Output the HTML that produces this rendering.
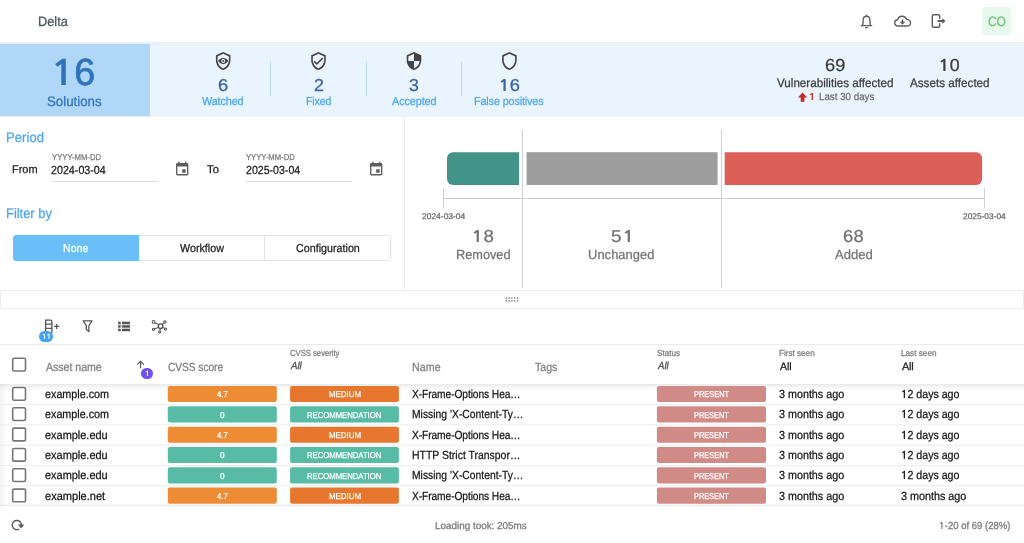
<!DOCTYPE html>
<html lang="en">
<head>
<meta charset="utf-8">
<title>Delta</title>
<style>
html,body{margin:0;padding:0;}
body{width:1024px;height:543px;overflow:hidden;background:#fff;position:relative;
  font-family:"Liberation Sans",Arial,sans-serif;color:#222;}
#page{position:absolute;left:0;top:0;width:1024px;height:543px;overflow:hidden;will-change:transform;text-rendering:geometricPrecision;}
.a{position:absolute;white-space:nowrap;line-height:1;transform-origin:0 50%;-webkit-text-stroke:0.25px;}
.o{font-family:"NanumGothic","Liberation Sans",sans-serif;font-weight:bold;font-size:.92em;-webkit-text-stroke:0;display:inline-block;transform:scaleX(1.2);margin:0 .03em;}
.b{position:absolute;}
svg{position:absolute;overflow:visible;}
.vd{position:absolute;width:1px;background:#b9dbf7;top:62px;height:34px;}
.ul{position:absolute;height:1px;background:#dcdcdc;}
</style>
</head>
<body>
<div id="page">

<!-- HEADER -->
<div id="delta" class="a" style="left:38.42px;top:15.17px;font-size:13.5px;color:#46535c;transform:scaleX(0.948);">Delta</div>
<svg id="hdricons" style="left:0;top:0;" width="1024" height="44" viewBox="0 0 1024 44" fill="none" stroke="#5f5f5f" stroke-width="1.4" stroke-linecap="round" stroke-linejoin="round">
  <!-- bell -->
  <path d="M861.3 25.6 H871.7 M862.5 25.4 C863.1 24.4 863.1 23 863.1 20.6 C863.1 17.8 864.5 16.2 866.5 16.2 C868.5 16.2 869.9 17.8 869.9 20.6 C869.9 23 869.9 24.4 870.5 25.4"/>
  <path d="M866.5 15.2 V16" />
  <path d="M865.6 27.6 H867.4" />
  <!-- cloud -->
  <path d="M898.3 26 C896.2 26 894.7 24.6 894.7 22.8 C894.7 21.1 896 19.8 897.7 19.7 C898.1 17.6 900 16.3 902.2 16.3 C904.3 16.3 906 17.5 906.6 19.4 C908.8 19.3 910.5 20.7 910.5 22.7 C910.5 24.6 909 26 907 26 Z"/>
  <path d="M901.7 19.4 H903.3 V21.7 H905.2 L902.5 24.7 L899.8 21.7 H901.7 Z" fill="#5a5a5a" stroke="none"/>
  <!-- logout -->
  <path d="M939.7 18.4 V15.8 C939.7 15.2 939.2 14.7 938.6 14.7 H933.4 C932.8 14.7 932.3 15.2 932.3 15.8 V26.2 C932.3 26.8 932.8 27.3 933.4 27.3 H938.6 C939.2 27.3 939.7 26.8 939.7 26.2 V23.6"/>
  <path d="M937.6 19.9 H942.2 V18.3 L945.5 21 L942.2 23.7 V22.1 H937.6 Z" fill="#5a5a5a" stroke="none"/>
</svg>
<div class="b" style="left:982.2px;top:6.9px;width:28.8px;height:28.6px;background:#e7f9ed;border-radius:3.5px;"></div>
<div id="co" class="a" style="left:988.19px;top:14.67px;font-size:13.5px;color:#6cc678;letter-spacing:-0.28px;transform:scaleX(0.900);">CO</div>
<!-- SUMMARY BAND -->
<div class="b" style="left:0;top:42px;width:1024px;height:75px;background:#efefef;"></div>
<div class="b" style="left:0;top:43px;width:1024px;height:73px;background:#e9f4fe;"></div>
<div class="b" style="left:0;top:44px;width:150px;height:72px;background:#b1d7f8;"></div>
<div id="n16" class="a" style="left:51.14px;top:54.44px;font-size:37.75px;color:#2f74ba;-webkit-text-stroke:0.76px;"><span class="o">1</span>6</div>
<div id="solutions" class="a" style="left:46.70px;top:95.36px;font-size:13.75px;color:#2f74ba;letter-spacing:-0.03px;transform:scaleX(0.970);">Solutions</div>
<div id="w_n" class="a" style="left:218.03px;top:77.00px;font-size:17.25px;color:#3b63a5;transform:scaleX(1.068);-webkit-text-stroke:0.25px;">6</div>
<div id="w_l" class="a" style="left:202.49px;top:97.17px;font-size:11.5px;color:#4ea7f1;letter-spacing:-0.12px;transform:scaleX(0.940);">Watched</div>
<div class="vd" style="left:270px;"></div>
<div id="f_n" class="a" style="left:313.72px;top:77.00px;font-size:17.25px;color:#3b63a5;transform:scaleX(1.033);-webkit-text-stroke:0.25px;">2</div>
<div id="f_l" class="a" style="left:306.24px;top:97.17px;font-size:11.5px;color:#4ea7f1;letter-spacing:-0.12px;transform:scaleX(0.918);">Fixed</div>
<div class="vd" style="left:365.6px;"></div>
<div id="a_n" class="a" style="left:408.88px;top:77.00px;font-size:17.25px;color:#3b63a5;transform:scaleX(1.022);-webkit-text-stroke:0.25px;">3</div>
<div id="a_l" class="a" style="left:391.89px;top:97.17px;font-size:11.5px;color:#4ea7f1;letter-spacing:-0.11px;transform:scaleX(0.944);">Accepted</div>
<div class="vd" style="left:461px;"></div>
<div id="p_n" class="a" style="left:498.99px;top:77.00px;font-size:17.25px;color:#3b63a5;letter-spacing:-0.48px;transform:scaleX(1.063);-webkit-text-stroke:0.25px;"><span class="o">1</span>6</div>
<div id="p_l" class="a" style="left:474.02px;top:97.17px;font-size:11.5px;color:#4ea7f1;letter-spacing:-0.14px;transform:scaleX(0.940);">False positives</div>
<div id="v69" class="a" style="left:824.95px;top:57.49px;font-size:17.5px;color:#3a3a3a;transform:scaleX(1.042);-webkit-text-stroke:0.25px;">69</div>
<div id="vuln" class="a" style="left:777.38px;top:77.23px;font-size:12.25px;color:#3a3a3a;letter-spacing:0.01px;transform:scaleX(0.949);">Vulnerabilities affected</div>
<div id="one" class="a" style="left:808.80px;top:92.82px;font-size:10.25px;color:#c9302c;transform:scaleX(1.100);font-weight:bold;"><span class="o">1</span></div>
<div id="last30" class="a" style="left:818.68px;top:92.82px;font-size:10.25px;color:#707070;transform:scaleX(0.952);">Last 30 days</div>
<div id="v10" class="a" style="left:938.74px;top:57.49px;font-size:17.5px;color:#3a3a3a;letter-spacing:-0.05px;transform:scaleX(1.019);-webkit-text-stroke:0.25px;"><span class="o">1</span>0</div>
<div id="assets" class="a" style="left:910.29px;top:77.23px;font-size:12.25px;color:#3a3a3a;transform:scaleX(0.953);">Assets affected</div>
<svg id="shields" style="left:0;top:43px;" width="1024" height="73" viewBox="0 43 1024 73" fill="#444">
<g transform="translate(213.48,51.28) scale(0.81)"><path d="M21,11C21,16.55 17.16,21.74 12,23C6.84,21.74 3,16.55 3,11V5L12,1L21,5V11M12,21C15.75,20 19,15.54 19,11.22V6.3L12,3.18L5,6.3V11.22C5,15.54 8.25,20 12,21Z"/><path d="M12 8.2C8.9 8.2 6.6 10.2 5.6 12C6.6 13.8 8.9 15.8 12 15.8C15.1 15.8 17.4 13.8 18.4 12C17.4 10.2 15.1 8.2 12 8.2ZM12 9.6A2.4 2.4 0 1 1 12 14.4A2.4 2.4 0 1 1 12 9.6Z" fill-rule="evenodd"/><circle cx="12" cy="12" r="1.1"/></g>
<g transform="translate(308.78,51.28) scale(0.81)"><path d="M21,11C21,16.55 17.16,21.74 12,23C6.84,21.74 3,16.55 3,11V5L12,1L21,5V11M12,21C15.75,20 19,15.54 19,11.22V6.3L12,3.18L5,6.3V11.22C5,15.54 8.25,20 12,21Z"/><path d="M10,17L6,13L7.41,11.59L10,14.17L16.59,7.58L18,9Z"/></g>
<g transform="translate(404.28,51.28) scale(0.81)"><path d="M12,1L3,5V11C3,16.55 6.84,21.74 12,23C17.16,21.74 21,16.55 21,11V5L12,1M12,11.99H19C18.47,16.11 15.72,19.78 12,20.93V12H5V6.3L12,3.19V11.99Z"/></g>
<g transform="translate(499.68,51.28) scale(0.81)"><path d="M21,11C21,16.55 17.16,21.74 12,23C6.84,21.74 3,16.55 3,11V5L12,1L21,5V11M12,21C15.75,20 19,15.54 19,11.22V6.3L12,3.18L5,6.3V11.22C5,15.54 8.25,20 12,21Z"/></g>
<path d="M802.55 92.6 L807.1 97.5 H804.4 V101.7 H800.7 V97.5 H798 Z" fill="#c62828"/>
</svg>
<!-- PERIOD / FILTER PANEL -->
<div id="period" class="a" style="left:5.83px;top:131.26px;font-size:13.75px;color:#4ba6f2;letter-spacing:0.08px;transform:scaleX(0.948);">Period</div>
<div id="from" class="a" style="left:11.98px;top:165.38px;font-size:11.25px;color:#222;transform:scaleX(0.977);">From</div>
<div id="hint1" class="a" style="left:51.59px;top:153.00px;font-size:8.5px;color:#7a7a7a;transform:scaleX(0.909);">YYYY-MM-DD</div>
<div id="date1" class="a" style="left:51.42px;top:164.85px;font-size:11.75px;color:#1c1c1c;transform:scaleX(0.911);">2024-03-04</div>
<div class="ul" style="left:51.8px;top:180.8px;width:106px;"></div>
<div id="to" class="a" style="left:206.63px;top:165.48px;font-size:11.25px;color:#222;letter-spacing:0.16px;transform:scaleX(0.989);">To</div>
<div id="hint2" class="a" style="left:246.08px;top:153.00px;font-size:8.5px;color:#7a7a7a;transform:scaleX(0.903);">YYYY-MM-DD</div>
<div id="date2" class="a" style="left:245.80px;top:164.85px;font-size:11.75px;color:#1c1c1c;transform:scaleX(0.901);">2025-03-04</div>
<div class="ul" style="left:246.1px;top:180.8px;width:106px;"></div>
<svg id="cal" style="left:0;top:150px;" width="404" height="40" viewBox="0 150 404 40" fill="#5e5e5e">
  <g transform="translate(173.98,161.06) scale(0.685)"><path d="M17 12h-5v5h5v-5zM16 1v2H8V1H6v2H5c-1.11 0-1.99.9-1.99 2L3 19c0 1.1.89 2 2 2h14c1.1 0 2-.9 2-2V5c0-1.1-.9-2-2-2h-1V1h-2zm3 18H5V8h14v11z"/></g>
  <g transform="translate(367.98,161.06) scale(0.685)"><path d="M17 12h-5v5h5v-5zM16 1v2H8V1H6v2H5c-1.11 0-1.99.9-1.99 2L3 19c0 1.1.89 2 2 2h14c1.1 0 2-.9 2-2V5c0-1.1-.9-2-2-2h-1V1h-2zm3 18H5V8h14v11z"/></g>
</svg>
<div id="filterby" class="a" style="left:6.03px;top:207.26px;font-size:13.75px;color:#4ba6f2;transform:scaleX(0.938);">Filter by</div>
<div class="b" style="left:13.3px;top:234.8px;width:377.3px;height:26.2px;border:1px solid #e2e2e2;border-radius:3.5px;box-sizing:border-box;background:#fff;"></div>
<div class="b" style="left:13.3px;top:234.8px;width:125.6px;height:26.2px;background:#6abff8;border-radius:3.5px 0 0 3.5px;"></div>
<div class="b" style="left:264.3px;top:235.8px;width:1px;height:24.2px;background:#e2e2e2;"></div>
<div id="none" class="a" style="left:62.87px;top:244.07px;font-size:11.5px;color:#fff;letter-spacing:-0.04px;transform:scaleX(0.926);">None</div>
<div id="workflow" class="a" style="left:179.91px;top:244.07px;font-size:11.5px;color:#222;transform:scaleX(0.933);">Workflow</div>
<div id="config" class="a" style="left:296.00px;top:244.07px;font-size:11.5px;color:#222;transform:scaleX(0.933);">Configuration</div>
<div class="b" style="left:404px;top:116px;width:1px;height:174px;background:#ececec;"></div>
<!-- DELTA CHART -->
<svg id="chart" style="left:404px;top:120px;" width="620" height="170" viewBox="404 120 620 170">
  <path d="M453 152.2 H519 V185 H453 A6 6 0 0 1 447 179 V158.2 A6 6 0 0 1 453 152.2 Z" fill="#419487"/>
  <rect x="526.6" y="152.2" width="191" height="32.8" fill="#9e9e9e"/>
  <path d="M724.7 152.2 H976.1 A6 6 0 0 1 982.1 158.2 V179 A6 6 0 0 1 976.1 185 H724.7 Z" fill="#dc5f58"/>
  <g fill="#cfcfcf">
    <rect x="443" y="198" width="542" height="1"/>
    <rect x="443" y="188.3" width="1" height="19.2"/>
    <rect x="984" y="188.3" width="1" height="19.2"/>
    <rect x="522" y="130" width="1" height="157.6"/>
    <rect x="721" y="130" width="1" height="157.6"/>
  </g>
</svg>
<div id="d1" class="a" style="left:421.57px;top:213.12px;font-size:8.25px;color:#666;transform:scaleX(1.025);">2024-03-04</div>
<div id="d2" class="a" style="left:962.60px;top:213.12px;font-size:8.25px;color:#666;transform:scaleX(1.013);">2025-03-04</div>
<div id="c18" class="a" style="left:471.89px;top:228.10px;font-size:17.25px;color:#727272;transform:scaleX(1.086);-webkit-text-stroke:0.25px;"><span class="o">1</span>8</div>
<div id="removed" class="a" style="left:455.84px;top:248.48px;font-size:13.25px;color:#727272;transform:scaleX(0.961);">Removed</div>
<div id="c51" class="a" style="left:611.26px;top:228.10px;font-size:17.25px;color:#727272;letter-spacing:0.69px;transform:scaleX(1.100);-webkit-text-stroke:0.25px;">5<span class="o">1</span></div>
<div id="unchanged" class="a" style="left:588.20px;top:248.48px;font-size:13.25px;color:#727272;letter-spacing:0.07px;transform:scaleX(0.973);">Unchanged</div>
<div id="c68" class="a" style="left:843.05px;top:228.10px;font-size:17.25px;color:#727272;letter-spacing:0.18px;transform:scaleX(1.063);-webkit-text-stroke:0.25px;">68</div>
<div id="added" class="a" style="left:834.60px;top:248.48px;font-size:13.25px;color:#727272;transform:scaleX(0.982);">Added</div>
<!-- SPLITTER -->
<div class="b" style="left:0;top:290px;width:1024px;height:18.6px;border:1px solid #ededed;box-sizing:border-box;background:#fff;"></div>
<svg id="grip" style="left:500px;top:294px;" width="24" height="10" viewBox="500 294 24 10" fill="#777"><rect x="505.6" y="297.4" width="1.4" height="1.4"/><rect x="508.4" y="297.4" width="1.4" height="1.4"/><rect x="511.2" y="297.4" width="1.4" height="1.4"/><rect x="514.0" y="297.4" width="1.4" height="1.4"/><rect x="516.8" y="297.4" width="1.4" height="1.4"/><rect x="505.6" y="300.2" width="1.4" height="1.4"/><rect x="508.4" y="300.2" width="1.4" height="1.4"/><rect x="511.2" y="300.2" width="1.4" height="1.4"/><rect x="514.0" y="300.2" width="1.4" height="1.4"/><rect x="516.8" y="300.2" width="1.4" height="1.4"/></svg>
<!-- TOOLBAR -->
<svg id="tbicons" style="left:0;top:310px;" width="200" height="34" viewBox="0 310 200 34" fill="none" stroke="#555" stroke-width="1.3">
  <!-- column plus -->
  <path d="M45.6 333 V320.1 H50.6 Q51.9 320.1 51.9 321.4 V333 M45.6 324.1 H51.9 M45.6 328.4 H51.9"/>
  <path d="M54.1 326.4 H59.2 M56.65 323.9 V328.9"/>
  <!-- filter -->
  <path d="M83.2 320.9 H92 L88.9 325.6 V331.6 L86.3 329.6 V325.6 Z" stroke-linejoin="round"/>
  <!-- list -->
  <g fill="#555" stroke="none">
    <rect x="118.1" y="321.7" width="2.6" height="2.5"/><rect x="122" y="321.7" width="8" height="2.5"/>
    <rect x="118.1" y="325.2" width="2.6" height="2.5"/><rect x="122" y="325.2" width="8" height="2.5"/>
    <rect x="118.1" y="328.7" width="2.6" height="2.5"/><rect x="122" y="328.7" width="8" height="2.5"/>
  </g>
  <!-- hub -->
  <g stroke-width="1.1">
  <path d="M158.6 324.6 L154.9 322.7 M162.3 324.4 L164 322.8 M158.3 327.4 L154.8 328.8 M160.2 328.9 L159.8 330.5 M163 327.4 L164.4 328.4"/>
  <circle cx="160.6" cy="326.2" r="2.3" stroke-width="1.4"/>
  <circle cx="153.6" cy="321.9" r="1.4"/>
  <circle cx="164.8" cy="321.9" r="1.1"/>
  <circle cx="153.5" cy="329.3" r="1.1"/>
  <circle cx="159.6" cy="331.8" r="1.1"/>
  <circle cx="165.5" cy="329.1" r="1.1"/>
  </g>
</svg>
<div class="b" style="left:38.8px;top:330.6px;width:14.5px;height:11.3px;border-radius:5.7px;background:#43a3f3;"></div>
<div id="b11" class="a" style="left:41.72px;top:332.55px;font-size:7.5px;color:#fff;letter-spacing:-0.41px;transform:scaleX(1.100);-webkit-text-stroke:0;"><span class="o">1</span><span class="o">1</span></div>
<!-- TABLE HEADER -->
<div class="b" style="left:0;top:344px;width:1024px;height:1px;background:#ebebeb;"></div>
<div class="b" style="left:0;top:346px;width:1024px;height:38px;background:#fff;"></div>
<div class="b" style="left:0;top:384px;width:1024px;height:7px;background:linear-gradient(to bottom,rgba(0,0,0,.085),rgba(0,0,0,.03) 45%,rgba(0,0,0,0));"></div>
<div class="b" style="left:0;top:384px;width:7px;height:121px;background:linear-gradient(to right,rgba(0,0,0,.05),rgba(0,0,0,0));"></div>
<div id="asset" class="a" style="left:46.06px;top:361.75px;font-size:11.75px;color:#7d7d7d;letter-spacing:-0.02px;transform:scaleX(0.900);">Asset name</div>
<svg id="sorticon" style="left:134px;top:358px;" width="14" height="14" viewBox="134 358 14 14" fill="none" stroke="#5c5c5c" stroke-width="1.15">
  <path d="M140.6 368.2 V361.6 M137.3 364.7 L140.6 361.4 L143.9 364.7"/>
</svg>
<div class="b" style="left:141.3px;top:367.9px;width:11.6px;height:11.4px;border-radius:6px;background:#7150f1;"></div>
<div id="b1" class="a" style="left:145.40px;top:370.25px;font-size:7.5px;color:#fff;transform:scaleX(1.100);"><span class="o">1</span></div>
<div id="cvss" class="a" style="left:167.98px;top:361.85px;font-size:11.75px;color:#7d7d7d;letter-spacing:-0.07px;transform:scaleX(0.870);">CVSS score</div>
<div id="sev" class="a" style="left:290.03px;top:348.69px;font-size:8.75px;color:#7a7a7a;letter-spacing:-0.03px;transform:scaleX(0.882);">CVSS severity</div>
<div id="all1" class="a" style="left:290.69px;top:362.02px;font-size:10.25px;color:#484848;transform:scaleX(0.943);font-style:italic;">All</div>
<div id="name" class="a" style="left:411.92px;top:361.85px;font-size:11.75px;color:#7d7d7d;letter-spacing:0.07px;transform:scaleX(0.907);">Name</div>
<div id="tags" class="a" style="left:535.30px;top:361.85px;font-size:11.75px;color:#7d7d7d;transform:scaleX(0.899);">Tags</div>
<div id="status" class="a" style="left:656.94px;top:348.69px;font-size:8.75px;color:#7a7a7a;transform:scaleX(0.925);">Status</div>
<div id="all2" class="a" style="left:657.60px;top:362.02px;font-size:10.25px;color:#484848;transform:scaleX(0.937);font-style:italic;">All</div>
<div id="first" class="a" style="left:779.00px;top:348.69px;font-size:8.75px;color:#7a7a7a;transform:scaleX(0.928);">First seen</div>
<div id="all3" class="a" style="left:779.55px;top:362.30px;font-size:10.75px;color:#1a1a1a;transform:scaleX(0.978);">All</div>
<div id="last" class="a" style="left:901.22px;top:348.69px;font-size:8.75px;color:#7a7a7a;transform:scaleX(0.937);">Last seen</div>
<div id="all4" class="a" style="left:902.06px;top:362.30px;font-size:10.75px;color:#1a1a1a;letter-spacing:-0.20px;transform:scaleX(1.018);">All</div>
<!-- TABLE ROWS -->
<svg id="chips" style="left:0;top:380px;" width="1024" height="130" viewBox="0 380 1024 130"><rect x="0" y="404.00" width="1024" height="1" fill="#ededed"/><rect x="0" y="424.32" width="1024" height="1" fill="#ededed"/><rect x="0" y="444.64" width="1024" height="1" fill="#ededed"/><rect x="0" y="464.96" width="1024" height="1" fill="#ededed"/><rect x="0" y="485.28" width="1024" height="1" fill="#ededed"/><rect x="0" y="504.80" width="1024" height="1" fill="#e3e3e3"/><rect x="167.8" y="386.00" width="109" height="16.1" rx="2" fill="#ee8c35"/><rect x="290.1" y="386.00" width="108.8" height="16.1" rx="2" fill="#e7772f"/><rect x="656.9" y="386.00" width="109.1" height="16.1" rx="2" fill="#d18b87"/><rect x="167.8" y="406.32" width="109" height="16.1" rx="2" fill="#57bba5"/><rect x="290.1" y="406.32" width="108.8" height="16.1" rx="2" fill="#57bba5"/><rect x="656.9" y="406.32" width="109.1" height="16.1" rx="2" fill="#d18b87"/><rect x="167.8" y="426.64" width="109" height="16.1" rx="2" fill="#ee8c35"/><rect x="290.1" y="426.64" width="108.8" height="16.1" rx="2" fill="#e7772f"/><rect x="656.9" y="426.64" width="109.1" height="16.1" rx="2" fill="#d18b87"/><rect x="167.8" y="446.96" width="109" height="16.1" rx="2" fill="#57bba5"/><rect x="290.1" y="446.96" width="108.8" height="16.1" rx="2" fill="#57bba5"/><rect x="656.9" y="446.96" width="109.1" height="16.1" rx="2" fill="#d18b87"/><rect x="167.8" y="467.28" width="109" height="16.1" rx="2" fill="#57bba5"/><rect x="290.1" y="467.28" width="108.8" height="16.1" rx="2" fill="#57bba5"/><rect x="656.9" y="467.28" width="109.1" height="16.1" rx="2" fill="#d18b87"/><rect x="167.8" y="487.60" width="109" height="16.1" rx="2" fill="#ee8c35"/><rect x="290.1" y="487.60" width="108.8" height="16.1" rx="2" fill="#e7772f"/><rect x="656.9" y="487.60" width="109.1" height="16.1" rx="2" fill="#d18b87"/></svg>
<div id="r0a" class="a" style="left:45.29px;top:388.55px;font-size:11.75px;color:#141414;transform:scaleX(0.917);">example.com</div>
<div id="r0s" class="a" style="left:216.80px;top:389.90px;font-size:8.5px;color:#fff;transform:scaleX(0.905);">4.7</div>
<div id="r0v" class="a" style="left:329.04px;top:389.90px;font-size:8.5px;color:#fff;letter-spacing:-0.03px;transform:scaleX(0.932);">MEDIUM</div>
<div id="r0n" class="a" style="left:412.34px;top:388.55px;font-size:11.75px;color:#141414;letter-spacing:-0.10px;transform:scaleX(0.870);">X-Frame-Options Hea…</div>
<div id="r0p" class="a" style="left:693.80px;top:389.90px;font-size:8.5px;color:#fff;transform:scaleX(0.872);">PRESENT</div>
<div id="r0f" class="a" style="left:779.12px;top:388.55px;font-size:11.75px;color:#141414;transform:scaleX(0.915);">3 months ago</div>
<div id="r0l" class="a" style="left:900.86px;top:388.55px;font-size:11.75px;color:#141414;letter-spacing:-0.03px;transform:scaleX(0.908);"><span class="o">1</span>2 days ago</div>
<div id="r1a" class="a" style="left:45.29px;top:408.87px;font-size:11.75px;color:#141414;transform:scaleX(0.917);">example.com</div>
<div id="r1s" class="a" style="left:219.92px;top:411.22px;font-size:8.5px;color:#fff;transform:scaleX(0.973);">0</div>
<div id="r1v" class="a" style="left:307.05px;top:411.22px;font-size:8.5px;color:#fff;letter-spacing:-0.04px;transform:scaleX(0.912);">RECOMMENDATION</div>
<div id="r1n" class="a" style="left:411.88px;top:408.87px;font-size:11.75px;color:#141414;letter-spacing:0.01px;transform:scaleX(0.880);">Missing 'X-Content-Ty…</div>
<div id="r1p" class="a" style="left:693.98px;top:411.22px;font-size:8.5px;color:#fff;letter-spacing:-0.05px;transform:scaleX(0.872);">PRESENT</div>
<div id="r1f" class="a" style="left:779.00px;top:408.87px;font-size:11.75px;color:#141414;transform:scaleX(0.915);">3 months ago</div>
<div id="r1l" class="a" style="left:900.86px;top:408.87px;font-size:11.75px;color:#141414;letter-spacing:-0.03px;transform:scaleX(0.908);"><span class="o">1</span>2 days ago</div>
<div id="r2a" class="a" style="left:45.28px;top:430.19px;font-size:11.75px;color:#141414;transform:scaleX(0.931);">example.edu</div>
<div id="r2s" class="a" style="left:216.80px;top:430.54px;font-size:8.5px;color:#fff;transform:scaleX(0.905);">4.7</div>
<div id="r2v" class="a" style="left:329.04px;top:430.54px;font-size:8.5px;color:#fff;letter-spacing:-0.03px;transform:scaleX(0.932);">MEDIUM</div>
<div id="r2n" class="a" style="left:412.34px;top:430.19px;font-size:11.75px;color:#141414;letter-spacing:-0.10px;transform:scaleX(0.870);">X-Frame-Options Hea…</div>
<div id="r2p" class="a" style="left:693.98px;top:430.54px;font-size:8.5px;color:#fff;letter-spacing:-0.05px;transform:scaleX(0.872);">PRESENT</div>
<div id="r2f" class="a" style="left:779.12px;top:430.19px;font-size:11.75px;color:#141414;transform:scaleX(0.915);">3 months ago</div>
<div id="r2l" class="a" style="left:900.86px;top:430.19px;font-size:11.75px;color:#141414;letter-spacing:-0.03px;transform:scaleX(0.908);"><span class="o">1</span>2 days ago</div>
<div id="r3a" class="a" style="left:45.28px;top:449.51px;font-size:11.75px;color:#141414;transform:scaleX(0.931);">example.edu</div>
<div id="r3s" class="a" style="left:219.92px;top:450.86px;font-size:8.5px;color:#fff;transform:scaleX(0.973);">0</div>
<div id="r3v" class="a" style="left:307.05px;top:450.86px;font-size:8.5px;color:#fff;letter-spacing:-0.04px;transform:scaleX(0.912);">RECOMMENDATION</div>
<div id="r3n" class="a" style="left:411.91px;top:449.51px;font-size:11.75px;color:#141414;transform:scaleX(0.889);">HTTP Strict Transpor…</div>
<div id="r3p" class="a" style="left:693.80px;top:450.86px;font-size:8.5px;color:#fff;transform:scaleX(0.872);">PRESENT</div>
<div id="r3f" class="a" style="left:779.12px;top:449.51px;font-size:11.75px;color:#141414;transform:scaleX(0.915);">3 months ago</div>
<div id="r3l" class="a" style="left:900.86px;top:449.51px;font-size:11.75px;color:#141414;letter-spacing:-0.03px;transform:scaleX(0.908);"><span class="o">1</span>2 days ago</div>
<div id="r4a" class="a" style="left:45.28px;top:469.83px;font-size:11.75px;color:#141414;transform:scaleX(0.931);">example.edu</div>
<div id="r4s" class="a" style="left:219.92px;top:472.18px;font-size:8.5px;color:#fff;transform:scaleX(0.973);">0</div>
<div id="r4v" class="a" style="left:307.05px;top:472.18px;font-size:8.5px;color:#fff;letter-spacing:-0.04px;transform:scaleX(0.912);">RECOMMENDATION</div>
<div id="r4n" class="a" style="left:411.88px;top:469.83px;font-size:11.75px;color:#141414;letter-spacing:0.01px;transform:scaleX(0.880);">Missing 'X-Content-Ty…</div>
<div id="r4p" class="a" style="left:693.98px;top:472.18px;font-size:8.5px;color:#fff;letter-spacing:-0.05px;transform:scaleX(0.872);">PRESENT</div>
<div id="r4f" class="a" style="left:779.00px;top:469.83px;font-size:11.75px;color:#141414;transform:scaleX(0.915);">3 months ago</div>
<div id="r4l" class="a" style="left:900.86px;top:469.83px;font-size:11.75px;color:#141414;letter-spacing:-0.03px;transform:scaleX(0.908);"><span class="o">1</span>2 days ago</div>
<div id="r5a" class="a" style="left:45.25px;top:491.15px;font-size:11.75px;color:#141414;transform:scaleX(0.940);">example.net</div>
<div id="r5s" class="a" style="left:216.80px;top:491.50px;font-size:8.5px;color:#fff;transform:scaleX(0.905);">4.7</div>
<div id="r5v" class="a" style="left:329.04px;top:491.50px;font-size:8.5px;color:#fff;letter-spacing:-0.03px;transform:scaleX(0.932);">MEDIUM</div>
<div id="r5n" class="a" style="left:412.34px;top:491.15px;font-size:11.75px;color:#141414;letter-spacing:-0.10px;transform:scaleX(0.870);">X-Frame-Options Hea…</div>
<div id="r5p" class="a" style="left:693.98px;top:491.50px;font-size:8.5px;color:#fff;letter-spacing:-0.05px;transform:scaleX(0.872);">PRESENT</div>
<div id="r5f" class="a" style="left:779.12px;top:491.15px;font-size:11.75px;color:#141414;transform:scaleX(0.915);">3 months ago</div>
<div id="r5l" class="a" style="left:901.21px;top:491.15px;font-size:11.75px;color:#141414;transform:scaleX(0.918);">3 months ago</div>
<svg id="checks" style="left:0;top:350px;" width="40" height="160" viewBox="0 350 40 160" fill="#fff" stroke="#757575" stroke-width="1.6"><rect x="12.7" y="358.30" width="12.8" height="12.7" rx="1.4"/><rect x="12.7" y="387.50" width="12.8" height="12.7" rx="1.4"/><rect x="12.7" y="407.82" width="12.8" height="12.7" rx="1.4"/><rect x="12.7" y="428.14" width="12.8" height="12.7" rx="1.4"/><rect x="12.7" y="448.46" width="12.8" height="12.7" rx="1.4"/><rect x="12.7" y="468.78" width="12.8" height="12.7" rx="1.4"/><rect x="12.7" y="489.10" width="12.8" height="12.7" rx="1.4"/></svg>
<!-- FOOTER -->
<svg id="refresh" style="left:8px;top:516px;" width="20" height="18" viewBox="8 516 20 18" fill="none" stroke="#5a5a5a" stroke-width="1.4">
  <path d="M19.15 529.03 A4.6 4.6 0 1 1 21.45 525.05"/>
  <path d="M17.9 524.6 H24.3 L21.2 528.4 Z" fill="#5a5a5a" stroke="none"/>
</svg>
<div id="loading" class="a" style="left:434.56px;top:521.74px;font-size:10px;color:#777;letter-spacing:-0.01px;transform:scaleX(0.990);">Loading took: 205ms</div>
<div id="pager" class="a" style="left:939.36px;top:521.52px;font-size:10.25px;color:#777;transform:scaleX(0.927);"><span class="o">1</span>-20 of 69 (28%)</div>
</div>
</body>
</html>
